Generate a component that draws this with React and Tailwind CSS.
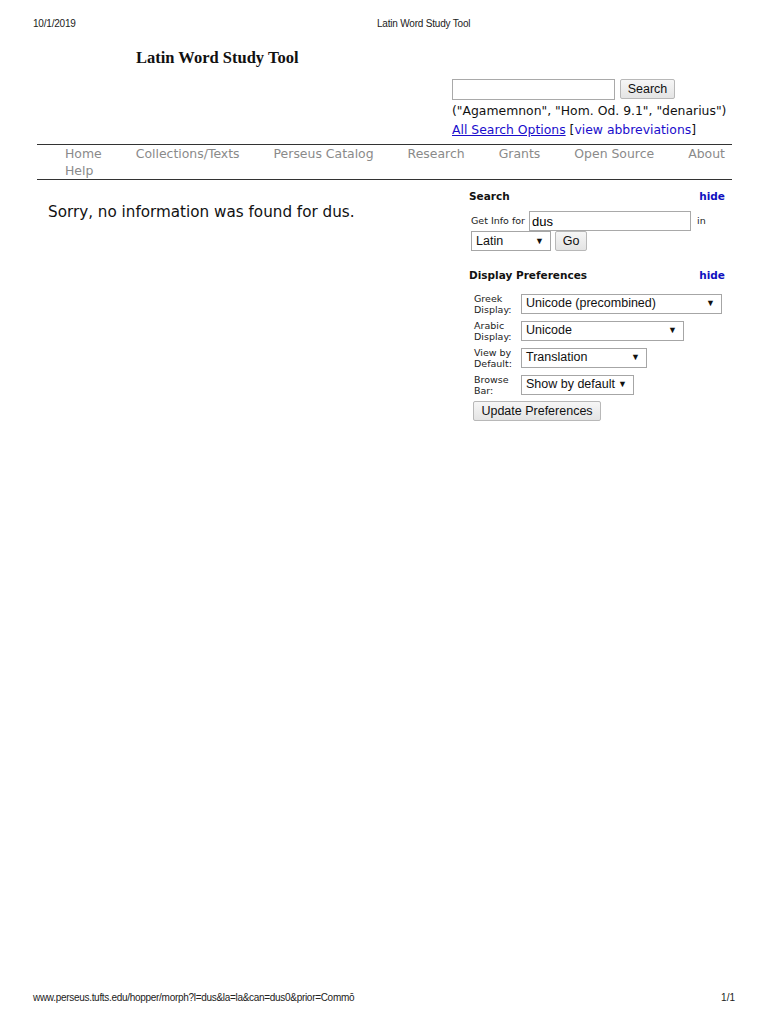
import React from "react";

const sansN = { fontFamily: '"Liberation Sans", Arial, sans-serif' };

function Select({ w, children }) {
  return (
    <div
      className={`flex items-center justify-between h-[20px] border border-[#a6a6a6] bg-white pl-[4px] pr-[6px] text-[12.5px] leading-none text-[#111] whitespace-nowrap font-['Liberation_Sans',Arial,sans-serif] ${w}`}
    >
      <span>{children}</span>
      <span className="text-[9px]">▼</span>
    </div>
  );
}

function Btn({ w, children }) {
  return (
    <div
      className={`flex items-center justify-center h-[20px] border border-[#b8b8b8] rounded-[2px] bg-gradient-to-b from-[#f6f6f6] to-[#e4e4e4] text-[12.5px] leading-none text-[#111] whitespace-nowrap font-['Liberation_Sans',Arial,sans-serif] ${w}`}
    >
      {children}
    </div>
  );
}

function PrefRow({ l1, l2, w, value }) {
  return (
    <div className="flex items-center h-[27px]">
      <div className="w-[53px] pl-[6px] text-[9.5px] leading-[11px] text-[#222]">
        <div>{l1}</div>
        <div>{l2}</div>
      </div>
      <Select w={w}>{value}</Select>
    </div>
  );
}

export default function App() {
  return (
    <div className="w-[768px] min-h-[1024px] bg-white flex flex-col text-black font-['DejaVu_Sans',Verdana,sans-serif]">
      {/* print header */}
      <div className="flex pt-[18px] pl-[33px] h-[42px] text-[10px] leading-[12px] text-[#222]" style={sansN}>
        <span className="w-[344px] tracking-[-0.2px]">10/1/2019</span>
        <span className="tracking-[-0.2px]">Latin Word Study Tool</span>
      </div>

      <div className="pl-[37px] pr-[36px]">
        {/* title */}
        <div className="pl-[99px] h-[37px] pt-[6px]">
          <h1 className="text-[16.5px] leading-[20px] font-bold text-[#111] font-['Liberation_Serif','Times_New_Roman',serif]">
            Latin Word Study Tool
          </h1>
        </div>

        {/* search */}
        <div className="pl-[415px] flex flex-col items-start">
          <div className="flex items-center gap-[5px] h-[20px]">
            <div className="w-[163px] h-[21px] border border-[#a9a9a9] bg-white" />
            <Btn w="w-[55px]">Search</Btn>
          </div>
          <div className="mt-[2px] text-[12.4px] leading-[19px] text-[#111] whitespace-nowrap">
            ("Agamemnon", "Hom. Od. 9.1", "denarius")
          </div>
          <div className="text-[12.4px] leading-[20px] text-[#111] whitespace-nowrap">
            <a className="text-[#1a0dcc] underline">All Search Options</a> [
            <a className="text-[#1a0dcc]">view abbreviations</a>]
          </div>
        </div>

        {/* nav */}
        <div className="mt-[4px] border-t-[1.5px] border-b-[1.5px] border-[#333] pl-[28px]">
          <div className="flex flex-wrap gap-x-[34px] text-[12.45px] leading-[17px] text-[#8a8a8a]">
            <span>Home</span>
            <span>Collections/Texts</span>
            <span>Perseus Catalog</span>
            <span>Research</span>
            <span>Grants</span>
            <span>Open Source</span>
            <span>About</span>
            <span>Help</span>
          </div>
        </div>

        {/* content */}
        <div className="flex">
          <div className="flex-1 pl-[11px] pt-[22px]">
            <p className="text-[15.2px] leading-[20px] text-[#111]">Sorry, no information was found for dus.</p>
          </div>

          <div className="w-[264px] pt-[9px] pr-[7px]">
            <div className="flex justify-between items-center h-[16px] pl-[1px]">
              <span className="text-[10.5px] font-bold text-[#111]">Search</span>
              <span className="text-[10.5px] font-bold text-[#1010c0]">hide</span>
            </div>
            <div className="flex items-center mt-[6px] pl-[3px] h-[20px]">
              <span className="text-[9.5px] text-[#222] w-[58px] whitespace-nowrap">Get Info for</span>
              <div className="w-[162px] h-[20px] border border-[#a9a9a9] bg-white pl-[2px] flex items-center text-[13px] leading-none font-['Liberation_Sans',Arial,sans-serif]">
                dus
              </div>
              <span className="ml-[6px] text-[9.5px] text-[#222]">in</span>
            </div>
            <div className="flex items-center gap-[4px] pl-[3px] h-[20px]">
              <Select w="w-[80px]">Latin</Select>
              <Btn w="w-[32px]">Go</Btn>
            </div>

            <div className="flex justify-between items-center h-[16px] pl-[1px] mt-[17px]">
              <span className="text-[10.5px] font-bold text-[#111]">Display Preferences</span>
              <span className="text-[10.5px] font-bold text-[#1010c0]">hide</span>
            </div>
            <div className="mt-[6px]">
              <PrefRow l1="Greek" l2="Display:" w="w-[201px]" value="Unicode (precombined)" />
              <PrefRow l1="Arabic" l2="Display:" w="w-[163px]" value="Unicode" />
              <PrefRow l1="View by" l2="Default:" w="w-[126px]" value="Translation" />
              <PrefRow l1="Browse" l2="Bar:" w="w-[113px]" value="Show by default" />
            </div>
            <div className="pl-[5px] mt-[3px]">
              <Btn w="w-[128px]">Update Preferences</Btn>
            </div>
          </div>
        </div>
      </div>

      {/* footer */}
      <div className="mt-auto flex justify-between pl-[33px] pr-[33px] pb-[20px] text-[10px] leading-[12px] text-[#222]" style={sansN}>
        <span className="tracking-[-0.3px]">www.perseus.tufts.edu/hopper/morph?l=dus&amp;la=la&amp;can=dus0&amp;prior=Commō</span>
        <span>1/1</span>
      </div>
    </div>
  );
}
